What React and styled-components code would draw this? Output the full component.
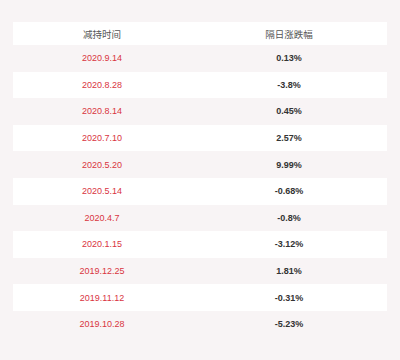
import React from "react";
import styled, { createGlobalStyle } from "styled-components";

const GlobalStyle = createGlobalStyle`
  html, body {
    margin: 0;
    padding: 0;
    background: #f8f4f5;
  }
  body {
    font-family: "Liberation Sans", Arial, "Noto Sans CJK SC", sans-serif;
  }
`;

const Page = styled.div`
  width: 400px;
  height: 360px;
  box-sizing: border-box;
  padding: 22px 13px 0 13px;
  background: #f8f4f5;
`;

const Table = styled.div`
  display: flex;
  flex-direction: column;
  width: 374px;
`;

const Row = styled.div`
  display: grid;
  grid-template-columns: 178px 196px;
  align-items: center;
  height: ${(p) => (p.$header ? "23px" : "26.6px")};
  background: ${(p) => (p.$striped ? "transparent" : "#ffffff")};
`;

const HeadCell = styled.div`
  text-align: center;
  font-family: "Noto Sans CJK SC", "Liberation Sans", sans-serif;
  font-size: 9.5px;
  color: #555555;
`;

const DateCell = styled.div`
  text-align: center;
  font-size: 9px;
  color: #d9343f;
`;

const ChangeCell = styled.div`
  text-align: center;
  font-size: 9px;
  font-weight: bold;
  color: #333333;
`;

const rows = [
  ["2020.9.14", "0.13%"],
  ["2020.8.28", "-3.8%"],
  ["2020.8.14", "0.45%"],
  ["2020.7.10", "2.57%"],
  ["2020.5.20", "9.99%"],
  ["2020.5.14", "-0.68%"],
  ["2020.4.7", "-0.8%"],
  ["2020.1.15", "-3.12%"],
  ["2019.12.25", "1.81%"],
  ["2019.11.12", "-0.31%"],
  ["2019.10.28", "-5.23%"],
];

export default function App() {
  return (
    <Page>
      <GlobalStyle />
      <Table>
        <Row $header>
          <HeadCell>减持时间</HeadCell>
          <HeadCell>隔日涨跌幅</HeadCell>
        </Row>
        {rows.map(([date, change], i) => (
          <Row key={date} $striped={i % 2 === 0}>
            <DateCell>{date}</DateCell>
            <ChangeCell>{change}</ChangeCell>
          </Row>
        ))}
      </Table>
    </Page>
  );
}
